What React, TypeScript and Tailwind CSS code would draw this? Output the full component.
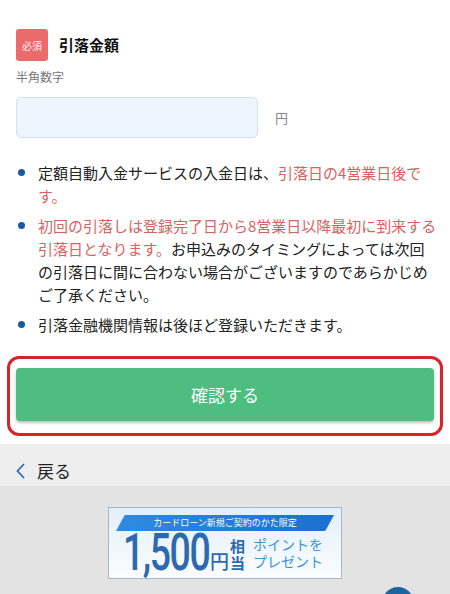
const jp = { fontFamily: '"Noto Sans CJK JP", "Noto Sans", sans-serif' }

function Bullet({ children }: { children: React.ReactNode }) {
  return (
    <li className="flex">
      <span className="w-[22px] shrink-0 pt-[8px]">
        <span className="block ml-[2px] size-[7px] rounded-full bg-[#1c5a9c]" />
      </span>
      <p className="w-[401px] shrink-0">{children}</p>
    </li>
  )
}

function Banner() {
  return (
    <div className="mx-auto w-[234px] h-[72px] overflow-hidden border border-[#a9b7c5] bg-gradient-to-b from-[#e2effa] to-[#fbfdff] px-[7px] pt-[7px] whitespace-nowrap">
      <div className="h-[16px] bg-gradient-to-r from-[#2f8be2] to-[#1b6fd0] [clip-path:polygon(4%_0,100%_0,96%_100%,0_100%)] flex items-center justify-center text-[9px] text-white">
        カードローン新規ご契約のかた限定
      </div>
      <div className="flex items-end pl-[7px] h-[43px]">
        <span className="w-[87px] h-[42px] leading-[42px]">
          <span className="inline-block origin-left scale-x-[0.72] text-[52px] font-medium text-[#2c69b0] tracking-[-2px] [font-family:Roboto,sans-serif]">
            1,500
          </span>
        </span>
        <span className="text-[19px] leading-[20px] font-medium text-[#2c69b0] mb-[3px]">円</span>
        <span className="flex flex-col text-[15px] font-bold text-[#2c69b0] ml-[1px] mb-[3px] leading-[17px]">
          <span>相</span>
          <span>当</span>
        </span>
        <span className="flex flex-col text-[14px] text-[#3b95d6] ml-[8px] mb-[4px] leading-[17px]">
          <span>ポイントを</span>
          <span>プレゼント</span>
        </span>
      </div>
    </div>
  )
}

export default function App() {
  return (
    <div className="relative w-[450px] h-[594px] overflow-hidden bg-[#e3e3e3]" style={jp}>
      <div className="bg-white px-4 pt-[29px]">
        <div className="flex items-center gap-[11px]">
          <span className="size-[32px] rounded-[3px] bg-[#ea6b6b] flex items-center justify-center text-[10px] text-white/90">
            必須
          </span>
          <h2 className="text-[15px] font-bold text-[#111]">引落金額</h2>
        </div>
        <p className="mt-[7px] text-[12px] leading-[18px] text-[#777]">半角数字</p>
        <div className="mt-[11px] flex items-center">
          <input className="w-[242px] h-[41px] rounded-[5px] border border-[#d3e0ee] bg-[#edf5ff] outline-none" />
          <span className="ml-[17px] text-[13px] text-[#888]">円</span>
        </div>
        <ul className="mt-[23px] flex flex-col gap-[7px] text-[15px] leading-[23px] text-[#222]">
          <Bullet>
            定額自動入金サービスの入金日は、
            <span className="text-[#d9625f]">
              引落日の4営業日後で
              <br />
              す。
            </span>
          </Bullet>
          <Bullet>
            <span className="text-[#d9625f]">初回の引落しは登録完了日から8営業日以降最初に到来する引落日となります。</span>
            お申込みのタイミングによっては次回の引落日に間に合わない場合がございますのであらかじめご了承ください。
          </Bullet>
          <Bullet>引落金融機関情報は後ほど登録いただきます。</Bullet>
        </ul>
        <div className="mt-[20px] mx-[-9px] pb-[8px]">
          <div className="rounded-[12px] border-[3px] border-[#d8232a] px-[6px] pt-[9px] pb-[12px]">
            <button className="w-full h-[53px] rounded-[4px] bg-[#4dbd80] text-white text-[17px] shadow-[0_2px_3px_rgba(0,0,0,0.25)]">
              確認する
            </button>
          </div>
        </div>
      </div>
      <div className="bg-[#eeeeee] h-[42px] flex items-center pl-[16px] pt-[12px]">
        <svg viewBox="0 0 9 16" className="w-[9px] h-[16px]" fill="none" stroke="#2a6db0" strokeWidth="1.8">
          <polyline points="8,1 1.5,8 8,15" />
        </svg>
        <span className="ml-[12px] text-[17px] text-[#222]">戻る</span>
      </div>
      <div className="pt-[21px]">
        <Banner />
      </div>
      <div className="absolute left-[382px] top-[587px] size-[32px] rounded-full bg-[#1f639f]" />
    </div>
  )
}
